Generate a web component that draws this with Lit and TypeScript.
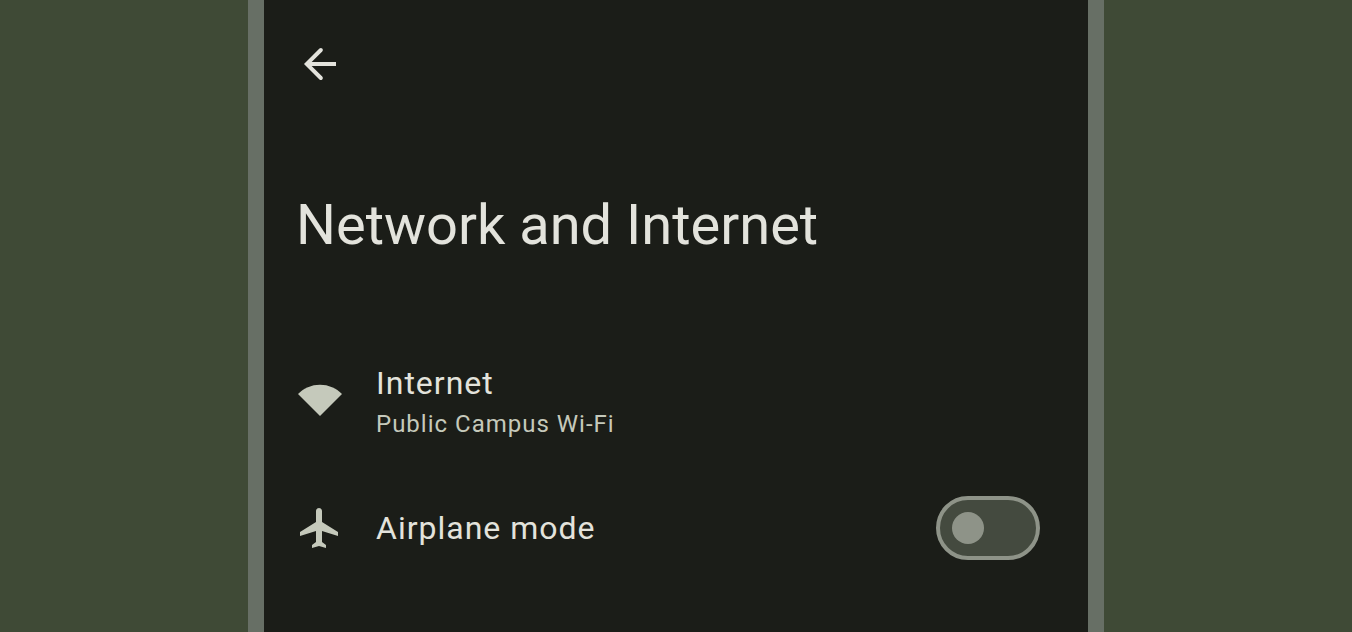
import { LitElement, html, css } from "lit";
import { customElement, state } from "lit/decorators.js";

@customElement("app-root")
export class AppRoot extends LitElement {
  @state() private airplane = false;

  static styles = css`
    :host {
      display: flex;
      justify-content: center;
      min-height: 100vh;
      box-sizing: border-box;
      padding: 0 248px;
      background: #3f4a36;
      font-family: Roboto, "Liberation Sans", sans-serif;
      color: #e3e3dc;
    }
    .phone {
      flex: 1;
      box-sizing: border-box;
      border: solid #676f65;
      border-width: 0 16px;
      background: #1b1d18;
    }
    .bar {
      display: flex;
      padding: 32px 24px;
    }
    .back {
      display: grid;
      place-items: center;
      width: 64px;
      height: 64px;
      padding: 0;
      border: 0;
      background: none;
      color: inherit;
    }
    svg {
      display: block;
      width: 48px;
      height: 48px;
      fill: currentColor;
    }
    h1 {
      margin: 0;
      padding: 64px 32px 78px;
      font-size: 56px;
      line-height: 66px;
      font-weight: 400;
    }
    .list {
      display: flex;
      flex-direction: column;
      margin: 0;
      padding: 0;
      list-style: none;
    }
    .row {
      display: flex;
      align-items: center;
      box-sizing: border-box;
      min-height: 128px;
      padding: 0 48px 0 32px;
      gap: 32px;
      color: inherit;
      text-decoration: none;
    }
    .icon {
      color: #c5c9bb;
    }
    .text {
      flex: 1;
      display: flex;
      flex-direction: column;
    }
    .title {
      font-size: 32px;
      line-height: 48px;
      letter-spacing: 1px;
    }
    .note {
      font-size: 24px;
      line-height: 34px;
      letter-spacing: 1px;
      color: #c5c9bb;
    }
    .switch {
      appearance: none;
      display: flex;
      align-items: center;
      box-sizing: border-box;
      width: 104px;
      height: 64px;
      margin: 0;
      padding: 0 12px;
      border: 4px solid #8e9388;
      border-radius: 32px;
      background: #444a3f;
    }
    .switch::before {
      content: "";
      width: 32px;
      height: 32px;
      border-radius: 50%;
      background: #8e9388;
    }
    .switch:checked {
      justify-content: flex-end;
    }
  `;

  private toggle(e: Event) {
    this.airplane = (e.target as HTMLInputElement).checked;
  }

  render() {
    return html`
      <main class="phone">
        <div class="bar">
          <button class="back" aria-label="Back">
            <svg viewBox="0 0 24 24"><path d="M20 11H7.83l5.3-5.3a.98.98 0 0 0 0-1.4.98.98 0 0 0-1.4 0L4 12l7.73 7.7a.98.98 0 0 0 1.4 0 .98.98 0 0 0 0-1.4L7.83 13H20z" /></svg>
          </button>
        </div>
        <h1>Network and Internet</h1>
        <ul class="list">
          <li>
            <a class="row" href="#internet">
              <svg class="icon" viewBox="0 0 24 24"><path d="M12 4.4C7.7 4.4 3.9 6.1 1 9L12 20 23 9C20.1 6.1 16.3 4.4 12 4.4z" /></svg>
              <span class="text">
                <span class="title">Internet</span>
                <span class="note">Public Campus Wi-Fi</span>
              </span>
            </a>
          </li>
          <li class="row">
            <svg class="icon" viewBox="0 0 24 24"><path d="M21 16v-2l-8-5V3.5c0-.83-.67-1.5-1.5-1.5S10 2.67 10 3.5V9l-8 5v2l8-2.5V19l-2 1.5V22l3.5-1 3.5 1v-1.5L13 19v-5.5l8 2.5z" /></svg>
            <label class="text title" for="airplane">Airplane mode</label>
            <input class="switch" id="airplane" type="checkbox" role="switch" .checked=${this.airplane} @change=${this.toggle} />
          </li>
        </ul>
      </main>
    `;
  }
}
